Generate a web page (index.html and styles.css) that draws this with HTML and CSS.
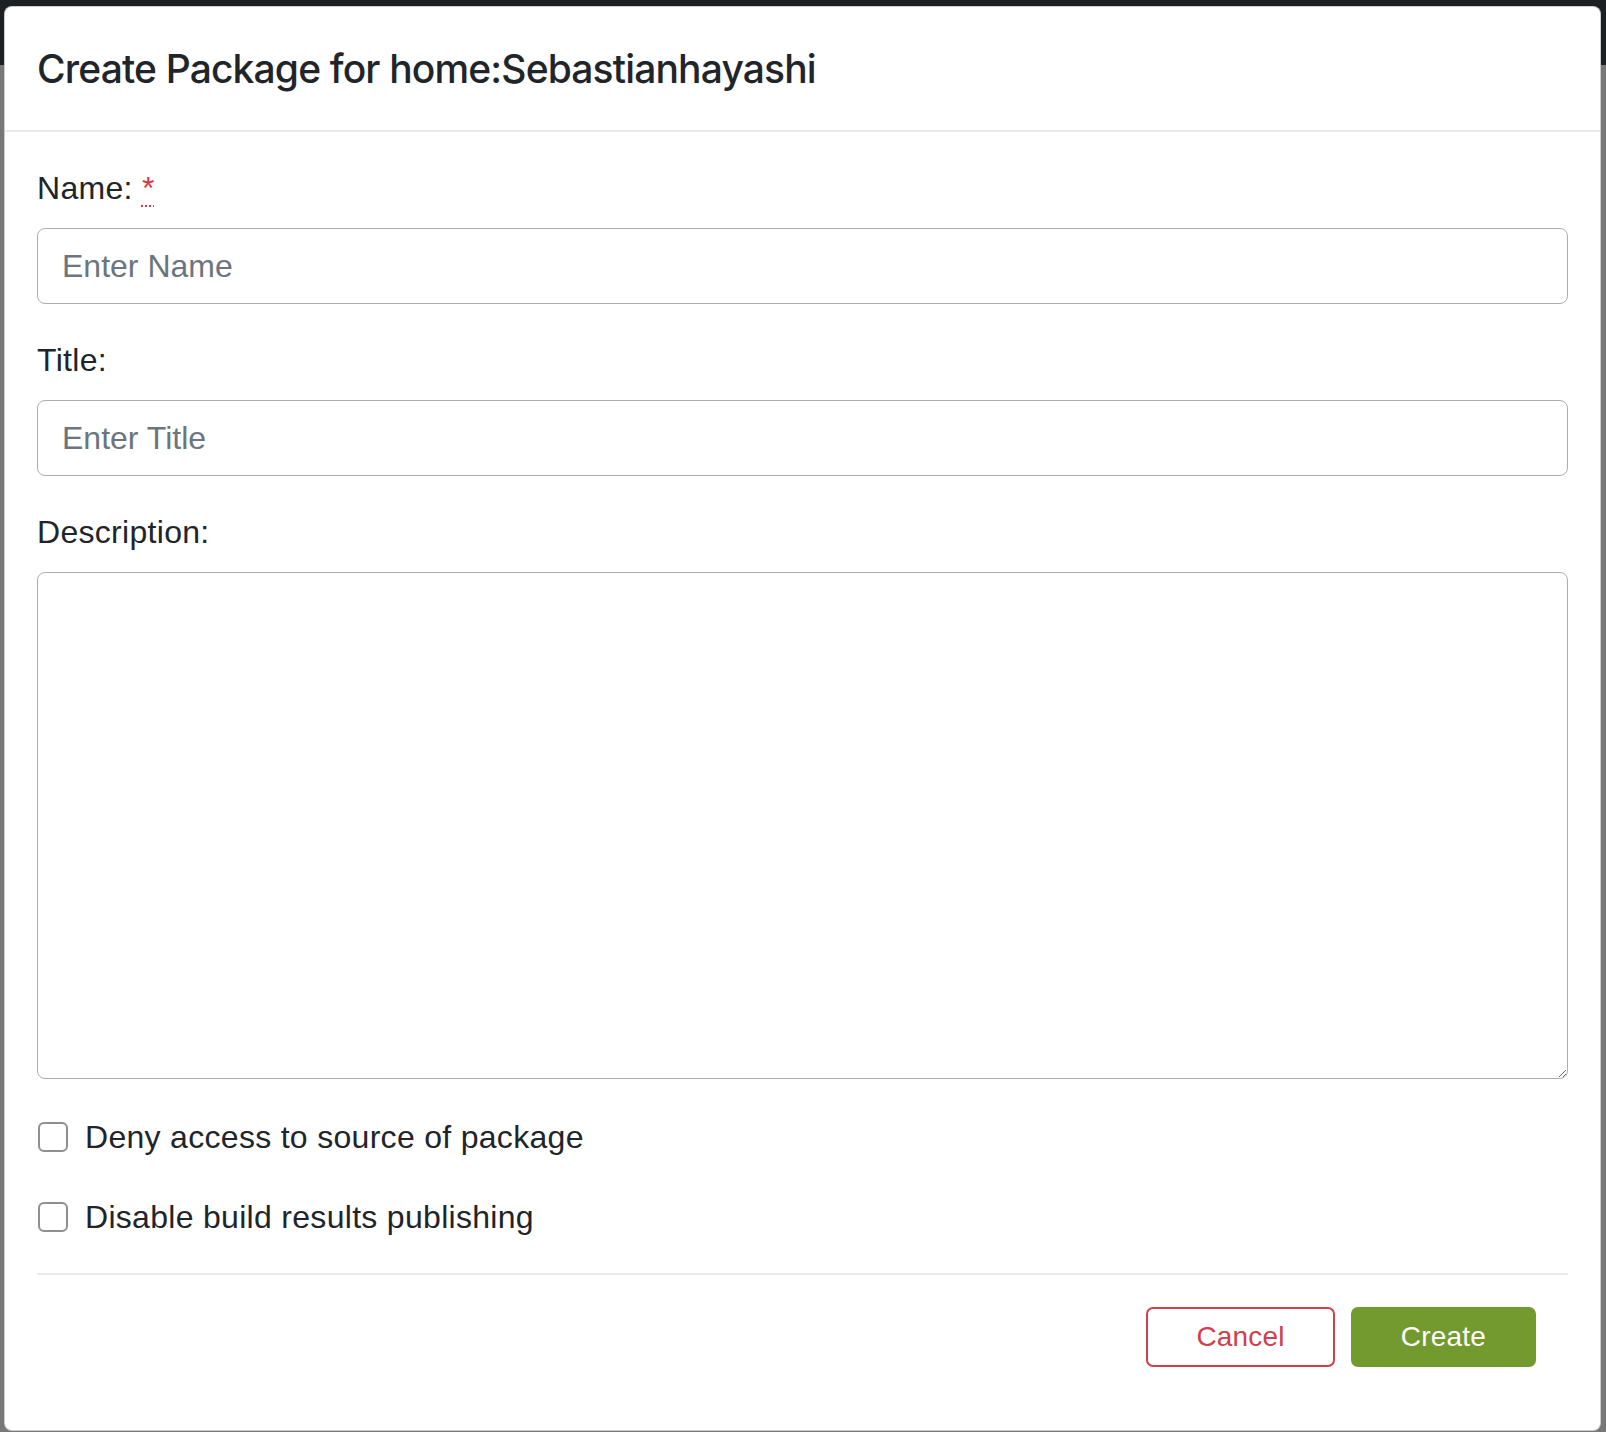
FILE: index.html
```html
<!DOCTYPE html>
<html lang="en">
<head>
<meta charset="utf-8">
<title>Create Package</title>
<link rel="stylesheet" href="styles.css">
</head>
<body>
<div class="page">
  <div class="modal">
    <div class="modal-header">
      <h5 class="modal-title">Create Package for home:Sebastianhayashi</h5>
    </div>
    <form class="modal-body">
      <div class="form-group">
        <label class="label" for="name">Name: <abbr class="req" title="required">*</abbr></label>
        <input class="control" id="name" type="text" placeholder="Enter Name">
      </div>
      <div class="form-group">
        <label class="label" for="title">Title:</label>
        <input class="control" id="title" type="text" placeholder="Enter Title">
      </div>
      <div class="form-group">
        <label class="label" for="desc">Description:</label>
        <textarea class="control area" id="desc"></textarea>
      </div>
      <div class="checks">
        <label class="check"><input type="checkbox" class="box"><span>Deny access to source of package</span></label>
        <label class="check"><input type="checkbox" class="box"><span>Disable build results publishing</span></label>
      </div>
      <div class="modal-footer">
        <button type="button" class="btn btn-cancel">Cancel</button>
        <button type="button" class="btn btn-create">Create</button>
      </div>
    </form>
  </div>
</div>
</body>
</html>
```
FILE: styles.css
```css
html, body {
  margin: 0;
  padding: 0;
}
body {
  width: 1606px;
  height: 1432px;
  overflow: hidden;
  background: linear-gradient(#1d2023 0, #1d2023 65px, #787878 65px, #787878 100%);
  font-family: "Liberation Sans", Arial, sans-serif;
  color: #212529;
}
.page {
  padding: 6px 5px 0 4px;
}
.modal {
  box-sizing: border-box;
  width: 1597px;
  height: 1425px;
  background: #fff;
  border: 1px solid rgba(0, 0, 0, 0.2);
  border-radius: 8px;
  display: flex;
  flex-direction: column;
}
.modal-header {
  padding: 32px 32px 31px;
  border-bottom: 2px solid #e9e9ef;
}
.modal-title {
  margin: 0;
  font-family: "Inter", "Liberation Sans", sans-serif;
  font-weight: 500;
  font-size: 39px;
  line-height: 60px;
  letter-spacing: -0.85px;
  color: #212529;
}
.modal-body {
  padding: 32px 32px 0;
  display: flex;
  flex-direction: column;
}
.form-group {
  margin-bottom: 32px;
}
.label {
  display: block;
  font-size: 32px;
  line-height: 48px;
  letter-spacing: 0.3px;
  margin-bottom: 16px;
}
.req {
  color: #dc3545;
  text-decoration: underline dotted;
  text-decoration-thickness: 2px;
  text-underline-offset: 6px;
  cursor: help;
}
.control {
  display: block;
  box-sizing: border-box;
  width: 100%;
  height: 76px;
  margin: 0;
  padding: 0 24px;
  border: 1px solid #adadad;
  border-radius: 8px;
  background: #fff;
  font-family: "Liberation Sans", Arial, sans-serif;
  font-size: 32px;
  color: #495057;
}
.control::placeholder {
  color: #6c757d;
}
.area {
  height: 507px;
  padding: 12px 24px;
  resize: both;
}
.checks {
  padding-top: 2px;
  display: flex;
  flex-direction: column;
  gap: 32px;
}
.check {
  display: flex;
  align-items: center;
  gap: 17px;
  height: 48px;
  font-size: 32px;
  line-height: 48px;
  letter-spacing: 0.3px;
}
.box {
  appearance: none;
  -webkit-appearance: none;
  box-sizing: border-box;
  width: 30px;
  height: 30px;
  margin: 0 0 0 1px;
  border: 2px solid #8f8f8f;
  border-radius: 6px;
  background: #fff;
}
.modal-footer {
  margin-top: 32px;
  border-top: 2px solid #e9e9ef;
  padding: 32px 32px 0;
  display: flex;
  justify-content: flex-end;
  gap: 16px;
}
.btn {
  box-sizing: border-box;
  height: 60px;
  padding: 0 48px;
  border-radius: 7px;
  font-family: "Liberation Sans", Arial, sans-serif;
  font-size: 28px;
  line-height: 56px;
  letter-spacing: 0.2px;
  cursor: pointer;
}
.btn-cancel {
  background: #fff;
  color: #d0404a;
  border: 2px solid #d0404a;
}
.btn-create {
  background: #729a2f;
  color: #fff;
  border: 2px solid #729a2f;
}
```
